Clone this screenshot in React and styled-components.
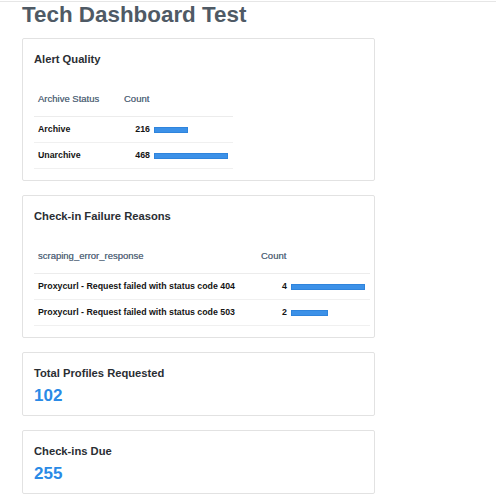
import React from "react";
import styled, { createGlobalStyle } from "styled-components";

const GlobalStyle = createGlobalStyle`
    html, body {
        margin: 0;
        padding: 0;
        background: #ffffff;
        font-family: "Liberation Sans", Arial, sans-serif;
    }
    * { box-sizing: border-box; }
`;

const alertRows = [
    { label: "Archive", value: 216 },
    { label: "Unarchive", value: 468 },
];

const failureRows = [
    { label: "Proxycurl - Request failed with status code 404", value: 4 },
    { label: "Proxycurl - Request failed with status code 503", value: 2 },
];

const BAR_MAX = 74;

const App = () => {
    const alertMax = Math.max(...alertRows.map((r) => r.value));
    const failMax = Math.max(...failureRows.map((r) => r.value));

    return (
        <>
            <GlobalStyle />
            <Page>
                <Title>Tech Dashboard Test</Title>
                <Stack>
                    <Card>
                        <CardTitle>Alert Quality</CardTitle>
                        <Table width={199}>
                            <HeadRow cols="86px 1fr">
                                <HeadCell>Archive Status</HeadCell>
                                <HeadCell>Count</HeadCell>
                            </HeadRow>
                            {alertRows.map((r) => (
                                <BodyRow cols="86px 1fr" key={r.label}>
                                    <Cell>{r.label}</Cell>
                                    <CountCell>
                                        <Num>{r.value}</Num>
                                        <Bar style={{ width: (r.value / alertMax) * BAR_MAX }} />
                                    </CountCell>
                                </BodyRow>
                            ))}
                        </Table>
                    </Card>

                    <Card>
                        <CardTitle>Check-in Failure Reasons</CardTitle>
                        <Table width={336}>
                            <HeadRow cols="223px 1fr">
                                <HeadCell>scraping_error_response</HeadCell>
                                <HeadCell>Count</HeadCell>
                            </HeadRow>
                            {failureRows.map((r) => (
                                <BodyRow cols="223px 1fr" key={r.label}>
                                    <Cell>{r.label}</Cell>
                                    <CountCell>
                                        <Num>{r.value}</Num>
                                        <Bar style={{ width: (r.value / failMax) * BAR_MAX }} />
                                    </CountCell>
                                </BodyRow>
                            ))}
                        </Table>
                    </Card>

                    <Card stat>
                        <CardTitle>Total Profiles Requested</CardTitle>
                        <StatValue>102</StatValue>
                    </Card>

                    <Card stat>
                        <CardTitle>Check-ins Due</CardTitle>
                        <StatValue>255</StatValue>
                    </Card>
                </Stack>
            </Page>
        </>
    );
};

const Page = styled.div`
    width: 496px;
    min-height: 500px;
    border-top: 1px solid #e6e6e6;
    margin-top: 1px;
    padding: 0 0 0 22px;
`;

const Title = styled.h1`
    margin: 0;
    font-size: 22.4px;
    line-height: 25px;
    font-weight: 700;
    color: #4f5a65;
`;

const Stack = styled.div`
    display: flex;
    flex-direction: column;
    gap: 14px;
    margin-top: 11px;
    width: 353px;
`;

const Card = styled.div`
    border: 1px solid #e2e2e2;
    border-radius: 2px;
    background: #fff;
    padding: ${(p) => (p.stat ? "13px 3px 9px 11px" : "13px 3px 11px 11px")};
`;

const CardTitle = styled.div`
    font-size: 11.2px;
    line-height: 14px;
    font-weight: 700;
    color: #2a2e33;
`;

const Table = styled.div`
    width: ${(p) => p.width}px;
    margin-top: 16px;
`;

const HeadRow = styled.div`
    display: grid;
    grid-template-columns: ${(p) => p.cols};
    border-bottom: 1px solid #ececec;
`;

const BodyRow = styled(HeadRow)`
    border-bottom: 1px solid #f0f0f0;
`;

const HeadCell = styled.div`
    padding: 11px 4px;
    font-size: 9.5px;
    line-height: 12px;
    color: #5c6d80;
    text-shadow: 0 0 0.3px #5c6d80;
`;

const Cell = styled.div`
    padding: 6px 4px 7px;
    font-size: 8.8px;
    line-height: 12px;
    font-weight: 700;
    color: #141414;
    white-space: nowrap;
`;

const CountCell = styled(Cell)`
    display: flex;
    align-items: center;
    gap: 4px;
`;

const Num = styled.span`
    width: 26px;
    text-align: right;
`;

const Bar = styled.span`
    display: block;
    height: 6px;
    margin-top: 1px;
    background: #3c91e8;
    border: 1px solid #2f84dc;
`;

const StatValue = styled.div`
    margin-top: 6px;
    font-size: 17px;
    line-height: 20px;
    font-weight: 700;
    color: #2a8ae6;
`;

export default App;
